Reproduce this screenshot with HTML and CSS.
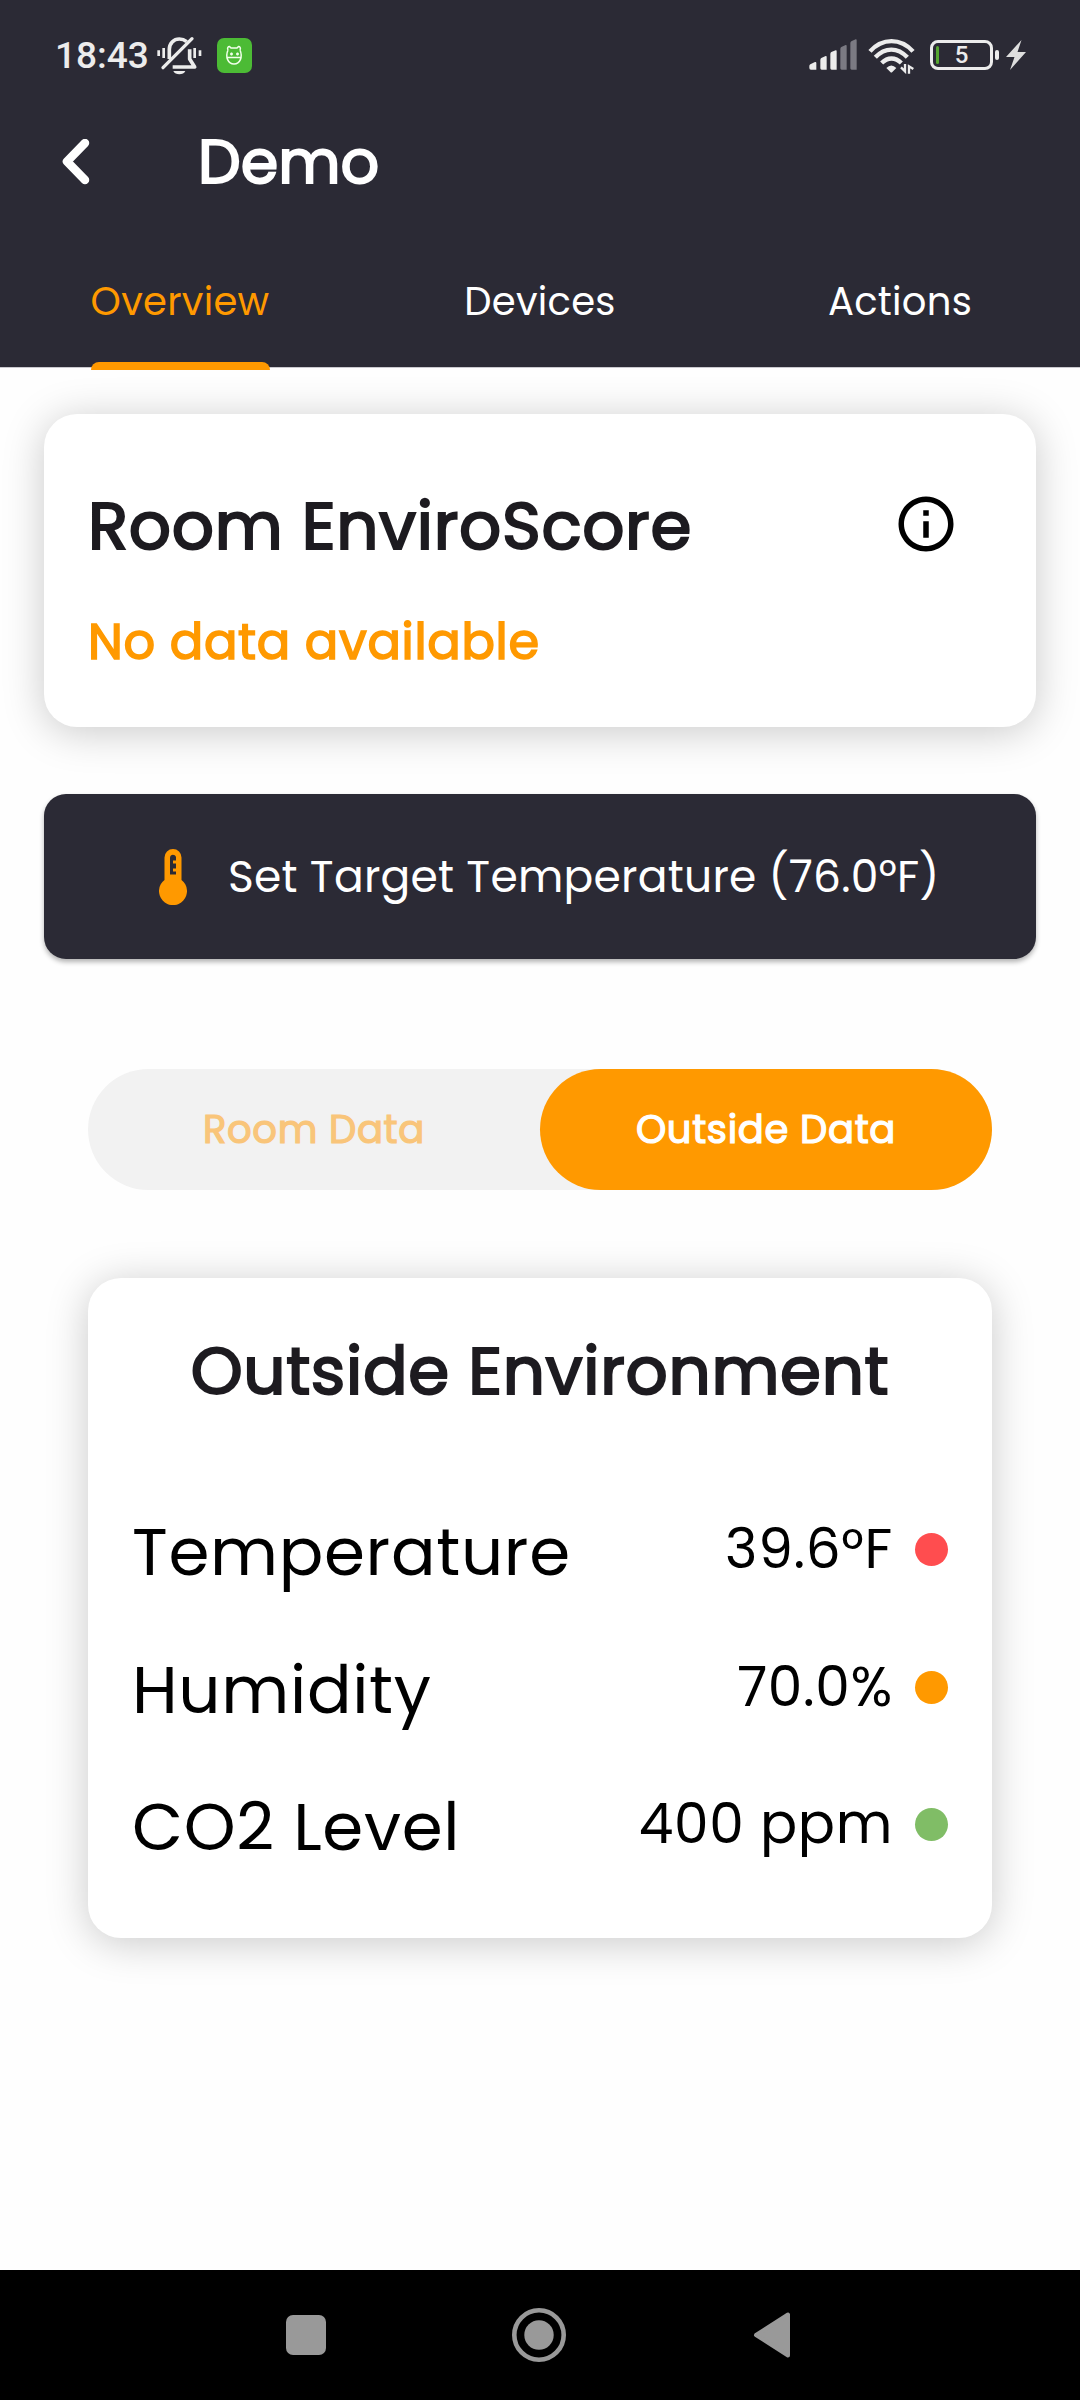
FILE: index.html
```html
<!DOCTYPE html>
<html lang="en">
<head>
<meta charset="utf-8">
<title>Demo</title>
<link rel="stylesheet" href="styles.css">
</head>
<body>
<header class="header">
  <div class="status">
    <div class="status-left">
      <span class="clock">18:43</span>
      <svg class="bell" width="45" height="40" viewBox="350 45 135 120" fill="none" stroke="#ececec" stroke-width="9" stroke-linecap="round">
        <path d="M355 91v17M370 84v30M463 84v30M479 91v17" stroke-width="8" stroke-linecap="butt"/>
        <path d="M387 117V88c0-18 13-31 30-31 9 0 16 3 22 8" stroke-width="11" stroke-linecap="butt"/>
        <path d="M448 88v29l15 24H397" stroke-width="11" stroke-linejoin="round" stroke-linecap="butt"/>
        <path d="M368 143 455 56" stroke-width="10"/>
        <path d="M399 153h36c-5 13-31 13-36 0z" fill="#ececec" stroke="none"/>
      </svg>
      <svg class="app" width="35" height="35" viewBox="0 0 35 35" fill="none" stroke="#f1ffeb" stroke-width="1.5">
        <rect width="35" height="35" rx="7" fill="#4cbb35" stroke="none"/>
        <path d="M11 12c-1-2 0-3.500 1.500-3.500l1.500 1.500h6l1.500-1.500c1.500 0 2.500 1.500 1.500 3.500M11 12c-3 7 0 14 6 14s9-7 6-14M9.500 19.500h15"/>
        <path d="M13 16h3M19 16h3M20.500 14.500v3M14.500 14.500v3"/>
      </svg>
    </div>
    <div class="status-right">
      <svg width="48" height="32" viewBox="54 60 144 96" fill="#ececec">
        <path d="M55 141q0-3 3-5l14-7q4-1 4 3v20H60q-5 0-5-5zM88 123q0-4 3-6l13-6q3-1 3 3v38H92q-4 0-4-4zM118 105q0-4 3-6l13-5q3-1 3 3v55h-15q-4 0-4-4z"/>
        <path fill="#7b7a83" d="M148 90q0-4 3-6l13-6q3-1 3 3v71h-15q-4 0-4-4zM178 73q0-4 3-6l13-6q3-1 3 3v88h-15q-4 0-4-4z"/>
      </svg>
      <svg class="wifi" width="47" height="37" viewBox="235 50 141 111" fill="none" stroke="#ececec" stroke-width="13">
        <path d="M241 93C278 52 333 52 370 93M257 111c29-31 67-31 96 0M276 128c18-18 41-18 59 0"/>
        <path fill="#ececec" stroke="none" d="M290 143q15-15 30 0l-12 12q-3 3-6 0z"/>
        <path stroke-width="7" d="M346 131v22l-12-12M358 160v-22l13 8"/>
      </svg>
      <div class="battery"><span>5</span></div>
      <svg class="bolt" width="20" height="30" viewBox="0 0 20 30"><path fill="#dedede" d="M15.500 0 0 17h8.500L4 30 20 12h-8.500z"/></svg>
    </div>
  </div>
  <div class="title-row">
    <svg class="back" width="30" height="48" viewBox="0 0 30 48"><path d="M25 4 7 22.500 25 41" fill="none" stroke="#fff" stroke-width="8.500" stroke-linecap="round" stroke-linejoin="round"/></svg>
    <h1 class="title">Demo</h1>
  </div>
  <nav class="tabs">
    <div class="tab tab-active">Overview</div>
    <div class="tab">Devices</div>
    <div class="tab">Actions</div>
  </nav>
</header>
<main class="content">
  <section class="card score">
    <div class="score-head">
      <h2 class="heading">Room EnviroScore</h2>
      <svg width="66" height="66" viewBox="0 0 24 24"><path d="M11 7h2v2h-2zm0 4h2v6h-2zm1-9C6.480 2 2 6.480 2 12s4.480 10 10 10 10-4.480 10-10S17.520 2 12 2zm0 18c-4.410 0-8-3.590-8-8s3.590-8 8-8 8 3.590 8 8-3.590 8-8 8z"/></svg>
    </div>
    <p class="empty">No data available</p>
  </section>
  <button class="target">
    <svg width="28" height="56" viewBox="0 0 28 56"><path fill="#ff9900" fill-rule="evenodd" d="M5.500 8.500a8.500 8.500 0 0 1 17 0V31a14 14 0 1 1-17 0zM11 9v16.500h6v-3h-3v-3h3v-5h-3v-3h3V8c-1-3-6-3-6 1z"/></svg>
    <span>Set Target Temperature (76.0°F)</span>
  </button>
  <div class="toggle">
    <div class="option">Room Data</div>
    <div class="option option-active">Outside Data</div>
  </div>
  <section class="card outside">
    <h2 class="heading centered">Outside Environment</h2>
    <div class="row"><span class="label">Temperature</span><span class="value">39.6°F</span><i class="dot red"></i></div>
    <div class="row"><span class="label">Humidity</span><span class="value">70.0%</span><i class="dot orange"></i></div>
    <div class="row"><span class="label">CO2 Level</span><span class="value">400 ppm</span><i class="dot green"></i></div>
  </section>
</main>
<footer class="navbar">
  <svg width="40" height="40"><rect width="40" height="40" rx="7" fill="#999"/></svg>
  <svg width="54" height="54"><circle cx="27" cy="27" r="24.700" fill="none" stroke="#999" stroke-width="4.600"/><circle cx="27" cy="27" r="14.700" fill="#999"/></svg>
  <svg width="38" height="48"><path d="M3 24 35 3.500v41z" fill="#999" stroke="#999" stroke-width="4" stroke-linejoin="round"/></svg>
</footer>
</body>
</html>
```
FILE: styles.css
```css
* { box-sizing: border-box; margin: 0; padding: 0; }
body {
  width: 1080px;
  height: 2400px;
  display: flex;
  flex-direction: column;
  background: #fefefe;
  font-family: Poppins, Inter, "Open Sans", sans-serif;
  color: #000;
  white-space: nowrap;
  overflow: hidden;
}
svg { display: block; flex: none; }

/* Status bar, title and tabs */
.header { height: 368px; background: #2b2a35; color: #fff; border-bottom: 1px solid #cac9cf; flex: none; }
.status { height: 110px; padding: 0 54px 0 55px; display: flex; justify-content: space-between; align-items: center; font-family: Roboto, sans-serif; color: #ececec; }
.status-left, .status-right { display: flex; align-items: center; }
.clock { font-size: 37px; font-weight: 500; width: 102px; padding-top: 1px; }
.app { margin-left: 15px; }
.wifi { margin-left: 11px; }
.battery { width: 63px; height: 30px; margin-left: 15px; border: 3px solid #ececec; border-radius: 8px; position: relative; display: flex; align-items: center; justify-content: center; font-size: 24px; font-weight: 500; }
.battery::before { content: ""; position: absolute; left: 3px; top: 3px; width: 3px; height: 18px; border-radius: 2px; background: #55a630; }
.battery::after { content: ""; position: absolute; left: 62px; top: 7px; width: 4px; height: 10px; border-radius: 2px; background: #ececec; }
.bolt { margin-left: 13px; }
.title-row { height: 105px; padding-left: 60px; display: flex; align-items: center; }
.title, .heading, .empty, .toggle { font-weight: 400; -webkit-text-stroke: .032em currentColor; }
.title { margin-left: 108px; padding-bottom: 2px; font-size: 60.5px; line-height: 80px; }
.tabs { margin-top: 21px; height: 130px; display: grid; grid-template-columns: repeat(3, 1fr); font-size: 38.5px; letter-spacing: .275px; }
.tab { display: flex; align-items: center; justify-content: center; position: relative; }
.tab-active { color: #ff9900; }
.tab-active::after { content: ""; position: absolute; left: 90.5px; width: 179px; top: 126px; height: 8px; border-radius: 8px 8px 0 0; background: #ff9900; }

/* Page content */
.content { flex: 1; padding: 46px 44px 0; display: flex; flex-direction: column; }
.card { background: #fff; border-radius: 33px; box-shadow: 0 5px 42px rgba(0, 0, 0, .21); }
.score { height: 313px; padding: 77px 77px 0 44px; }
.score-head { display: flex; justify-content: space-between; align-items: center; height: 66px; }
.heading { font-size: 66px; line-height: 80px; letter-spacing: .6875px; color: #1d1b20; padding-top: 3px; }
.empty { margin-top: 55px; font-size: 49.5px; line-height: 60px; letter-spacing: .6875px; color: #ff9900; }
.target { margin-top: 67px; height: 165px; border: 0; border-radius: 22px; background: #2b2a35; color: #fff; font: inherit; font-size: 44px; letter-spacing: .25px; display: flex; align-items: center; padding-left: 115px; gap: 41px; box-shadow: 0 3px 5px rgba(0, 0, 0, .3); }
.toggle { margin: 110px 44px 0; height: 121px; border-radius: 61px; background: #f2f2f2; display: grid; grid-template-columns: 1fr 1fr; font-size: 38.5px; letter-spacing: .6875px; color: #f9c57a; }
.option { border-radius: 61px; display: flex; align-items: center; justify-content: center; }
.option-active { background: #ff9900; color: #fff; }
.outside { margin: 88px 44px 0; height: 660px; padding: 53px 44px 0; }
.centered { text-align: center; padding: 0; margin-bottom: 70px; }
.row { height: 137.5px; display: flex; align-items: center; letter-spacing: .6875px; }
.label { font-size: 66px; flex: none; margin-right: auto; padding-top: 6px; }
.value { font-size: 55px; margin-bottom: 2px; }
.dot { width: 33px; height: 33px; border-radius: 50%; margin-left: 22px; }
.red { background: #ff4d4f; }
.orange { background: #ff9900; }
.green { background: #80bd66; }

/* System navigation */
.navbar { height: 130px; background: #000; flex: none; display: flex; align-items: center; padding-left: 286px; }
.navbar svg + svg { margin-left: 186px; }
.navbar svg:last-child { margin-left: 187px; }
```
